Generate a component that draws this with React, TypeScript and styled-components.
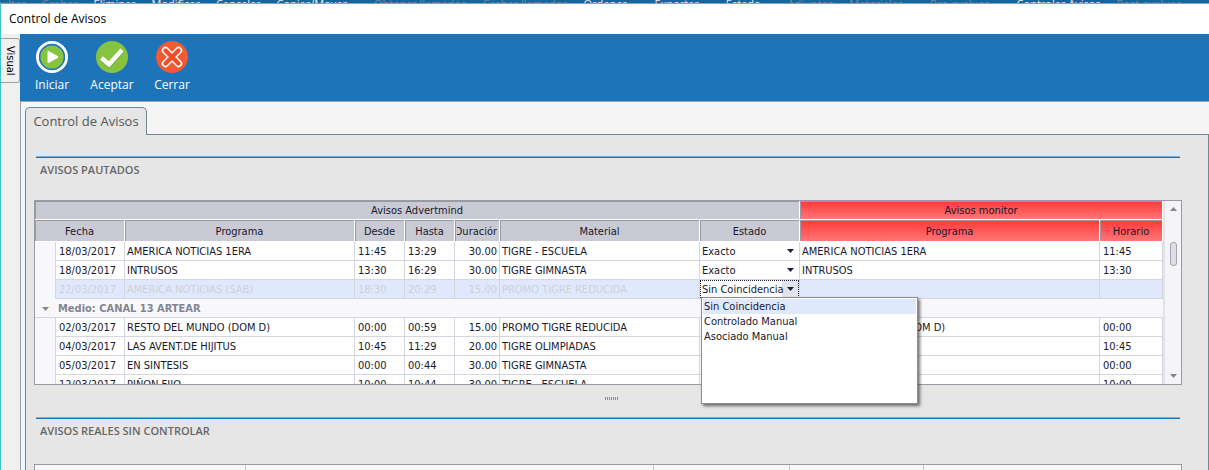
import React from 'react';
import styled, { createGlobalStyle, css } from 'styled-components';

const ui = `"Open Sans", "Noto Sans", sans-serif`;
const grid = `"DejaVu Sans Condensed", "Noto Sans", sans-serif`;

const Global = createGlobalStyle`
  *, *::before, *::after { box-sizing: border-box; }
  html, body { margin: 0; height: 100%; overflow: hidden; }
  body { font: 12px/16px ${ui}; color: #000; background: #e6e6e6; }
  button, select { font: inherit; color: inherit; margin: 0; }
`;

const Page = styled.div`
  height: 100vh;
  display: flex;
  flex-direction: column;
  overflow: hidden;
`;

const MainMenu = styled.nav`
  flex: none;
  height: 3px;
  overflow: hidden;
  display: flex;
  gap: 27px;
  font-size: 11px;
  line-height: 14px;
  background: #17649f;
`;

const MenuGroup = styled.div`
  flex: none;
  display: flex;
  gap: 16px;
  &:first-child { margin-left: -24px; }
`;

const MenuLink = styled.a<{ $dim?: boolean }>`
  margin-top: -3px;
  white-space: nowrap;
  text-decoration: none;
  color: ${p => (p.$dim ? '#7d8790' : '#f2ece4')};
`;

const Window = styled.div`
  flex: 1;
  min-height: 0;
  display: flex;
  flex-direction: column;
  border-top: 1px solid #3cc4cc;
  border-left: 1px solid #3cc4cc;
`;

const TitleBar = styled.header`
  flex: none;
  height: 30px;
  padding: 7px 8px;
  background: #fff;
`;

const Body = styled.div`
  flex: 1;
  min-height: 0;
  display: flex;
`;

const SideStrip = styled.aside`
  flex: none;
  width: 19px;
  padding-top: 4px;
  background: #f0f0f0;
`;

const SideTab = styled.button`
  width: 19px;
  height: 45px;
  padding: 0;
  overflow: hidden;
  writing-mode: vertical-rl;
  font: 11px/16px ${grid};
  border: 1px solid #a0a0a0;
  border-left: 0;
  border-radius: 0 3px 3px 0;
  background: #f0f0f0;
`;

const Main = styled.main`
  flex: 1;
  min-width: 0;
  display: flex;
  flex-direction: column;
`;

const Toolbar = styled.div`
  flex: none;
  display: flex;
  height: 67px;
  padding: 7px 2px;
  background: #1e74b8;
`;

const ToolButton = styled.button`
  width: 60px;
  padding: 0;
  display: flex;
  flex-direction: column;
  align-items: center;
  gap: 4px;
  border: 0;
  background: none;
  color: #fff;
  svg { flex: none; }
`;

const Content = styled.div`
  flex: 1;
  min-height: 0;
  display: flex;
  flex-direction: column;
  padding: 5px 0 0 4px;
  background: #f0f8ff;
  border-top: 1px solid #a0a0a0;
  border-left: 1px solid #a0a0a0;
`;

const TabStrip = styled.div`
  flex: none;
  display: flex;
  height: 28px;
  background: #f5f5f5;
`;

const Tab = styled.button`
  width: 122px;
  padding: 0 0 2px;
  font-size: 13px;
  color: #555;
  background: #e6e6e6;
  border: 1px solid #74898e;
  border-bottom: 0;
  border-radius: 5px 5px 0 0;
`;

const TabLine = styled.div`
  flex: 1;
  border-bottom: 1px solid #74898e;
`;

const Panel = styled.div`
  flex: 1;
  min-height: 0;
  padding: 21px 26px 0 8px;
  background: #e6e6e6;
  border: solid #74898e;
  border-width: 0 1px 0 1px;
`;

const SectionHead = styled.h2<{ $tall?: boolean }>`
  margin: 0 2px;
  height: ${p => (p.$tall ? 47 : 44)}px;
  padding: 5px 4px;
  border-top: 1px solid #7fb0d4;
  box-shadow: inset 0 1px 0 #1278bd;
  font: 600 11px/16px ${ui};
  color: #666;
`;

const GridFrame = styled.div`
  display: flex;
  height: 185px;
  border: 1px solid #9a9aa5;
  background: #f8f8fc;
`;

const Viewport = styled.div`
  flex: 1;
  min-width: 0;
  overflow: hidden;
`;

const Table = styled.table`
  width: 100%;
  table-layout: fixed;
  border-collapse: separate;
  border-spacing: 0;
  font: 11px/16px ${grid};
  color: #18182e;
`;

const Th = styled.th<{ $red?: boolean; $band?: boolean }>`
  height: ${p => (p.$band ? 19 : 22)}px;
  padding: 2px 2px 0;
  overflow: hidden;
  white-space: nowrap;
  font-weight: 400;
  border: solid #fff;
  border-width: 0 1px 1px 0;
  box-shadow: inset 1px 1px 0 #9a9aa5;
  background: ${p => (p.$red ? 'linear-gradient(#ff3838, #ff7676)' : '#cacad4')};
  span {
    display: flex;
    justify-content: center;
    overflow: hidden;
  }
`;

const cell = css`
  height: 19px;
  padding: 2px 2px 0;
  overflow: hidden;
  white-space: nowrap;
  border: solid #d6d6de;
  border-width: 0 1px 1px 0;
  background: #fff;
`;

const Row = styled.tr<{ $selected?: boolean }>`
  ${p => p.$selected && css`
    color: #cfd1d8;
    td + td { background: #e0e8fd; }
  `}
`;

const Td = styled.td<{ $align?: 'right' | 'wide' }>`
  ${cell}
  ${p => p.$align === 'right' && 'text-align: right;'}
  ${p => p.$align === 'wide' && 'padding-left: 3px;'}
`;

const Indent = styled.td`
  ${cell}
  border-bottom: 0;
  background: #f8f8fc;
`;

const GroupCell = styled.td`
  ${cell}
  border-right: 0;
  padding-left: 2px;
  background: #f8f8fc;
  color: #84848f;
  font-weight: 700;
`;

const GroupToggle = styled.button`
  display: flex;
  width: 100%;
  height: 16px;
  padding: 0 3px;
  align-items: center;
  justify-content: center;
  border: 0;
  background: none;
`;

const StateCell = styled.td`
  ${cell}
  padding: 0;
`;

const StateBox = styled.div<{ $open?: boolean }>`
  display: grid;
  grid-template-columns: 1fr 17px;
  align-items: center;
  height: 18px;
  color: #18182e;
  background: ${p => (p.$open ? 'linear-gradient(90deg, #fff calc(100% - 17px), #e3e4ea 0)' : '#fff')};
  outline: ${p => (p.$open ? '1px dotted #20203a' : 'none')};
  outline-offset: -1px;
  svg { grid-area: 1 / 2; justify-self: center; pointer-events: none; }
`;

const Select = styled.select`
  grid-area: 1 / 1 / 2 / 3;
  width: 100%;
  height: 18px;
  padding: 2px 0 0 2px;
  border: 0;
  outline: 0;
  appearance: none;
  background: none;
`;

const Popup = styled.ul`
  position: absolute;
  z-index: 2;
  width: 217px;
  height: 107px;
  margin: -1px 0 0 1px;
  padding: 1px;
  list-style: none;
  color: #18182e;
  background: #fff;
  border: 1px solid #8c8c98;
  box-shadow: 2px 2px 3px rgba(0, 0, 0, 0.55);
`;

const Option = styled.li<{ $active?: boolean }>`
  padding: 0 1px;
  line-height: 15px;
  background: ${p => (p.$active ? '#e0e8fd' : 'none')};
`;

const ScrollBar = styled.div`
  flex: none;
  width: 18px;
  display: flex;
  flex-direction: column;
  align-items: center;
  padding: 6px 0;
  border-left: 2px solid #e3e3e8;
  background: #f5f5f9;
`;

const Thumb = styled.div`
  width: 7px;
  height: 24px;
  margin: 31px 0 auto;
  border: 1px solid #a3a3ad;
  border-radius: 3px;
  background: #dedee4;
`;

const Splitter = styled.div`
  height: 32px;
  display: flex;
  justify-content: center;
  align-items: center;
  gap: 1px;
  padding: 0 0 6px 6px;
  i { width: 1px; height: 3px; background: #8a8a90; }
`;

const LowerFrame = styled.div`
  display: grid;
  grid-template-columns: 211px 1fr 136px 134px 257px;
  height: 185px;
  border: 1px solid #9a9aa5;
  background: #f8f8f8;
  div { border-right: 1px solid #c4c4cc; }
  div:last-child { border-right: 0; }
`;

const Arrow = ({ up, color = '#20203a' }: { up?: boolean; color?: string }) => (
  <svg width="7" height="4" viewBox="0 0 7 4" fill={color}>
    <path d={up ? 'M0 4 3.5 0 7 4Z' : 'M0 0H7L3.5 4Z'} />
  </svg>
);

const PlayIcon = () => (
  <svg width="32" height="32" viewBox="0 0 32 32">
    <circle cx="16" cy="16" r="14.6" fill="#1e74b8" stroke="#fff" strokeWidth="2.8" />
    <circle cx="16" cy="16" r="11.6" fill="#86c440" />
    <path d="M12.5 11v10l9-5z" fill="#fff" stroke="#fff" strokeWidth="2" strokeLinejoin="round" />
  </svg>
);

const CheckIcon = () => (
  <svg width="32" height="32" viewBox="0 0 32 32">
    <circle cx="16" cy="16" r="16" fill="#86c440" />
    <path d="M6 18.5 13 25 26.5 10" fill="none" stroke="#74b438" strokeWidth="4.5" />
    <path d="M5.5 17 13 23.5 26 9" fill="none" stroke="#fff" strokeWidth="4.4" />
  </svg>
);

const CloseIcon = () => (
  <svg width="32" height="32" viewBox="0 0 32 32">
    <circle cx="16" cy="16" r="16" fill="#f15a35" />
    <g fill="none" strokeLinecap="round">
      <path d="M9.5 9.5l13 13M22.5 9.5l-13 13" stroke="#fff" strokeWidth="7.4" />
      <path d="M9.5 9.5l13 13M22.5 9.5l-13 13" stroke="#f04e28" strokeWidth="4.4" />
    </g>
  </svg>
);

const menu: [string, boolean][][] = [
  [['Consultar', true], ['Grabar', true], ['Eliminar', false], ['Modificar', false], ['Cancelar', false], ['Copiar/Mover', false]],
  [['Obtener llamados', true], ['Grabar llamados', true], ['Ordenes', false]],
  [['Exportar', false]],
  [['Estado', false]],
  [['Adjuntos', true], ['Materiales', true]],
  [['Pre-evalues', true]],
  [['Controlar Avisos', false], ['Post-evalues', true]],
];

const states = ['Sin Coincidencia', 'Controlado Manual', 'Asociado Manual'];

type Aviso = {
  date: string; program: string; from: string; to: string; length: string;
  material: string; state: string; monitor: string; time: string; selected?: boolean;
};

const before: Aviso[] = [
  { date: '18/03/2017', program: 'AMERICA NOTICIAS 1ERA', from: '11:45', to: '13:29', length: '30.00', material: 'TIGRE - ESCUELA', state: 'Exacto', monitor: 'AMERICA NOTICIAS 1ERA', time: '11:45' },
  { date: '18/03/2017', program: 'INTRUSOS', from: '13:30', to: '16:29', length: '30.00', material: 'TIGRE GIMNASTA', state: 'Exacto', monitor: 'INTRUSOS', time: '13:30' },
  { date: '22/03/2017', program: 'AMERICA NOTICIAS (SAB)', from: '18:30', to: '20:29', length: '15.00', material: 'PROMO TIGRE REDUCIDA', state: 'Sin Coincidencia', monitor: '', time: '', selected: true },
];

const after: Aviso[] = [
  { date: '02/03/2017', program: 'RESTO DEL MUNDO (DOM D)', from: '00:00', to: '00:59', length: '15.00', material: 'PROMO TIGRE REDUCIDA', state: 'Exacto', monitor: 'RESTO DEL MUNDO (DOM D)', time: '00:00' },
  { date: '04/03/2017', program: 'LAS AVENT.DE HIJITUS', from: '10:45', to: '11:29', length: '20.00', material: 'TIGRE OLIMPIADAS', state: 'Exacto', monitor: '', time: '10:45' },
  { date: '05/03/2017', program: 'EN SINTESIS', from: '00:00', to: '00:44', length: '30.00', material: 'TIGRE GIMNASTA', state: 'Exacto', monitor: '', time: '00:00' },
  { date: '12/03/2017', program: 'PIÑON FIJO', from: '10:00', to: '10:44', length: '30.00', material: 'TIGRE - ESCUELA', state: 'Exacto', monitor: '', time: '10:00' },
];

const AvisoRow = ({ a }: { a: Aviso }) => (
  <Row $selected={a.selected}>
    <Indent />
    <Td $align="wide">{a.date}</Td>
    <Td>{a.program}</Td>
    <Td $align="wide">{a.from}</Td>
    <Td $align="wide">{a.to}</Td>
    <Td $align="right">{a.length}</Td>
    <Td>{a.material}</Td>
    <StateCell>
      <StateBox $open={a.selected}>
        <Select aria-label="Estado" defaultValue={a.state}>
          {!a.selected && <option>Exacto</option>}
          {states.map(s => <option key={s}>{s}</option>)}
        </Select>
        <Arrow />
      </StateBox>
      {a.selected && (
        <Popup role="listbox" aria-label="Estado">
          {states.map(s => (
            <Option key={s} role="option" aria-selected={s === a.state} $active={s === a.state}>{s}</Option>
          ))}
        </Popup>
      )}
    </StateCell>
    <Td>{a.monitor}</Td>
    <Td $align="wide">{a.time}</Td>
  </Row>
);

const widths = [21, 69, 230, 50, 50, 45, 200, 100, undefined, 63];

export default function App() {
  return (
    <Page>
      <Global />
      <MainMenu>
        {menu.map((group, i) => (
          <MenuGroup key={i}>
            {group.map(([label, dim]) => <MenuLink key={label} href="#" $dim={dim}>{label}</MenuLink>)}
          </MenuGroup>
        ))}
      </MainMenu>
      <Window>
        <TitleBar>Control de Avisos</TitleBar>
        <Body>
          <SideStrip><SideTab>Visual</SideTab></SideStrip>
          <Main>
            <Toolbar>
              <ToolButton><PlayIcon />Iniciar</ToolButton>
              <ToolButton><CheckIcon />Aceptar</ToolButton>
              <ToolButton><CloseIcon />Cerrar</ToolButton>
            </Toolbar>
            <Content>
              <TabStrip>
                <Tab>Control de Avisos</Tab>
                <TabLine />
              </TabStrip>
              <Panel>
                <SectionHead>AVISOS PAUTADOS</SectionHead>
                <GridFrame>
                  <Viewport>
                    <Table>
                      <colgroup>{widths.map((w, i) => <col key={i} width={w} />)}</colgroup>
                      <thead>
                        <tr>
                          <Th $band colSpan={8}>Avisos Advertmind</Th>
                          <Th $band $red colSpan={2}>Avisos monitor</Th>
                        </tr>
                        <tr>
                          <Th colSpan={2}>Fecha</Th>
                          <Th>Programa</Th>
                          <Th>Desde</Th>
                          <Th>Hasta</Th>
                          <Th><span>Duración</span></Th>
                          <Th>Material</Th>
                          <Th>Estado</Th>
                          <Th $red>Programa</Th>
                          <Th $red>Horario</Th>
                        </tr>
                      </thead>
                      <tbody>
                        {before.map(a => <AvisoRow key={a.program} a={a} />)}
                        <tr>
                          <GroupCell><GroupToggle aria-label="Contraer grupo"><Arrow color="#84848f" /></GroupToggle></GroupCell>
                          <GroupCell colSpan={9}>Medio: CANAL 13 ARTEAR</GroupCell>
                        </tr>
                        {after.map(a => <AvisoRow key={a.program} a={a} />)}
                      </tbody>
                    </Table>
                  </Viewport>
                  <ScrollBar>
                    <Arrow up color="#84848f" />
                    <Thumb />
                    <Arrow color="#84848f" />
                  </ScrollBar>
                </GridFrame>
                <Splitter>{[0, 1, 2, 3, 4, 5, 6].map(n => <i key={n} />)}</Splitter>
                <SectionHead $tall>AVISOS REALES SIN CONTROLAR</SectionHead>
                <LowerFrame><div /><div /><div /><div /><div /></LowerFrame>
              </Panel>
            </Content>
          </Main>
        </Body>
      </Window>
    </Page>
  );
}
